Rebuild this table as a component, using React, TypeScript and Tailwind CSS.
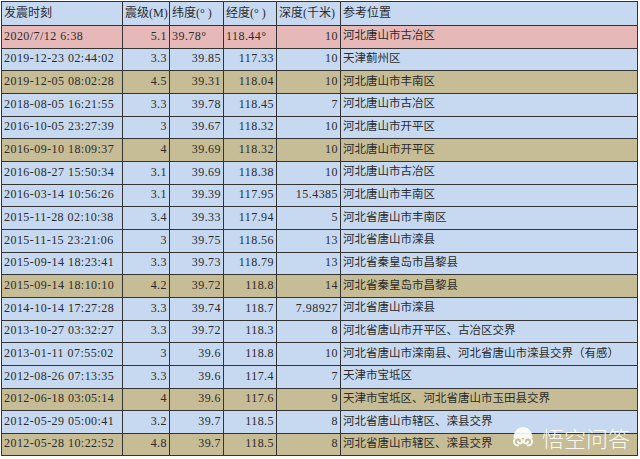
import React from "react";

type Row = {
  time: string;
  mag: string;
  lat: string;
  lon: string;
  depth: string;
  place: string;
  tone: "pink" | "blue" | "khaki";
  textCoords?: boolean;
};

const rows: Row[] = [
  { time: "2020/7/12 6:38", mag: "5.1", lat: "39.78°", lon: "118.44°", depth: "10", place: "河北唐山市古冶区", tone: "pink", textCoords: true },
  { time: "2019-12-23 02:44:02", mag: "3.3", lat: "39.85", lon: "117.33", depth: "10", place: "天津蓟州区", tone: "blue" },
  { time: "2019-12-05 08:02:28", mag: "4.5", lat: "39.31", lon: "118.04", depth: "10", place: "河北唐山市丰南区", tone: "khaki" },
  { time: "2018-08-05 16:21:55", mag: "3.3", lat: "39.78", lon: "118.45", depth: "7", place: "河北唐山市古冶区", tone: "blue" },
  { time: "2016-10-05 23:27:39", mag: "3", lat: "39.67", lon: "118.32", depth: "10", place: "河北唐山市开平区", tone: "blue" },
  { time: "2016-09-10 18:09:37", mag: "4", lat: "39.69", lon: "118.32", depth: "10", place: "河北唐山市开平区", tone: "khaki" },
  { time: "2016-08-27 15:50:34", mag: "3.1", lat: "39.69", lon: "118.38", depth: "10", place: "河北唐山市古冶区", tone: "blue" },
  { time: "2016-03-14 10:56:26", mag: "3.1", lat: "39.39", lon: "117.95", depth: "15.4385", place: "河北唐山市丰南区", tone: "blue" },
  { time: "2015-11-28 02:10:38", mag: "3.4", lat: "39.33", lon: "117.94", depth: "5", place: "河北省唐山市丰南区", tone: "blue" },
  { time: "2015-11-15 23:21:06", mag: "3", lat: "39.75", lon: "118.56", depth: "13", place: "河北省唐山市滦县", tone: "blue" },
  { time: "2015-09-14 18:23:41", mag: "3.3", lat: "39.73", lon: "118.79", depth: "13", place: "河北省秦皇岛市昌黎县", tone: "blue" },
  { time: "2015-09-14 18:10:10", mag: "4.2", lat: "39.72", lon: "118.8", depth: "14", place: "河北省秦皇岛市昌黎县", tone: "khaki" },
  { time: "2014-10-14 17:27:28", mag: "3.3", lat: "39.74", lon: "118.7", depth: "7.98927", place: "河北省唐山市滦县", tone: "blue" },
  { time: "2013-10-27 03:32:27", mag: "3.3", lat: "39.72", lon: "118.3", depth: "8", place: "河北省唐山市开平区、古冶区交界", tone: "blue" },
  { time: "2013-01-11 07:55:02", mag: "3", lat: "39.6", lon: "118.8", depth: "10", place: "河北省唐山市滦南县、河北省唐山市滦县交界（有感）", tone: "blue" },
  { time: "2012-08-26 07:13:35", mag: "3.3", lat: "39.6", lon: "117.4", depth: "7", place: "天津市宝坻区", tone: "blue" },
  { time: "2012-06-18 03:05:14", mag: "4", lat: "39.6", lon: "117.6", depth: "9", place: "天津市宝坻区、河北省唐山市玉田县交界", tone: "khaki" },
  { time: "2012-05-29 05:00:41", mag: "3.2", lat: "39.7", lon: "118.5", depth: "8", place: "河北省唐山市辖区、滦县交界", tone: "blue" },
  { time: "2012-05-28 10:22:52", mag: "4.8", lat: "39.7", lon: "118.5", depth: "8", place: "河北省唐山市辖区、滦县交界", tone: "khaki" },
];

const toneBg = {
  pink: "bg-[#e6b9b8]",
  blue: "bg-[#c6d9f0]",
  khaki: "bg-[#c6bc95]",
};

const grid = "grid grid-cols-[121px_47px_54px_53px_64px_297px]";
const cell = "flex items-end pb-[3px] px-[2px] border-r border-b border-[#333] overflow-hidden whitespace-nowrap";
const num = "tracking-[0.45px]";

// 悟空问答 logo: cloud dome over two swirls
function WukongMark() {
  return (
    <svg width="24" height="22" viewBox="0 0 24 22" fill="none">
      <path d="M2.5 12 C2.5 5.5 7 1 12 1 C17 1 21.5 5.5 21.5 12 Z" fill="white" />
      <path
        d="M7 19.5 A4 4 0 1 1 11 15.5 A2 2 0 1 1 7 15.5"
        stroke="white"
        strokeWidth="2"
        strokeLinecap="round"
      />
      <path
        d="M17 19.5 A4 4 0 1 0 13 15.5 A2 2 0 1 0 17 15.5"
        stroke="white"
        strokeWidth="2"
        strokeLinecap="round"
      />
    </svg>
  );
}

export default function App() {
  return (
    <div
      className="relative w-[640px] h-[459px] bg-white pt-[1px] pl-[1px] text-[12px] text-[#2b2b2b]"
      style={{ fontFamily: '"Liberation Serif", "Noto Sans CJK SC", serif' }}
    >
      <div className="w-[637px] border-l border-t border-[#333]">
        {/* header */}
        <div className={`${grid} h-[24px] ${toneBg.blue}`}>
          <div className={cell}>发震时刻</div>
          <div className={cell}>震级(M)</div>
          <div className={cell}>纬度(° )</div>
          <div className={cell}>经度(° )</div>
          <div className={cell}>深度(千米)</div>
          <div className={cell}>参考位置</div>
        </div>

        {rows.map((r, i) => (
          <div key={i} className={`${grid} h-[22.66px] ${toneBg[r.tone]}`}>
            <div className={`${cell} ${num}`}>{r.time}</div>
            <div className={`${cell} ${num} justify-end`}>{r.mag}</div>
            <div className={`${cell} ${num} ${r.textCoords ? "justify-start" : "justify-end"}`}>{r.lat}</div>
            <div className={`${cell} ${num} ${r.textCoords ? "justify-start" : "justify-end"}`}>{r.lon}</div>
            <div className={`${cell} ${num} justify-end`}>{r.depth}</div>
            <div className={`${cell} text-[11.5px]`}>{r.place}</div>
          </div>
        ))}
      </div>

      {/* watermark */}
      <div className="absolute left-[511px] top-[425px] flex h-[24px] items-center gap-[7px] opacity-90">
        <WukongMark />
        <span
          className="text-[22px] leading-none text-white font-light"
          style={{ fontFamily: '"Noto Sans CJK SC", sans-serif' }}
        >
          悟空问答
        </span>
      </div>
    </div>
  );
}
